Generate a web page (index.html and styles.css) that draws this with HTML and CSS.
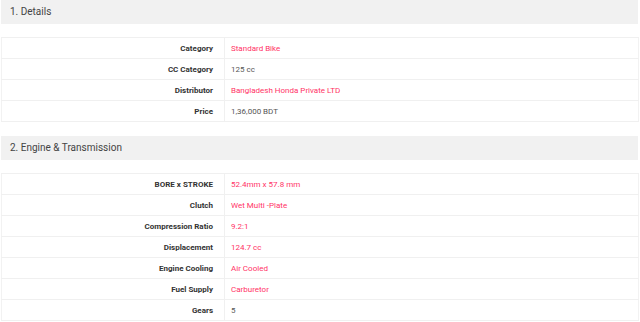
FILE: index.html
```html
<!DOCTYPE html>
<html>
<head>
<meta charset="utf-8">
<link rel="stylesheet" href="styles.css">
</head>
<body>
<div class="spec">
  <h3 class="spec-head">1. Details</h3>
  <table class="spec-table">
    <tr><th>Category</th><td class="link">Standard Bike</td></tr>
    <tr><th>CC Category</th><td>125 cc</td></tr>
    <tr><th>Distributor</th><td class="link">Bangladesh Honda Private LTD</td></tr>
    <tr><th>Price</th><td>1,36,000 BDT</td></tr>
  </table>
  <h3 class="spec-head">2. Engine &amp; Transmission</h3>
  <table class="spec-table">
    <tr><th>BORE x STROKE</th><td class="link">52.4mm x 57.8 mm</td></tr>
    <tr><th>Clutch</th><td class="link">Wet Multi -Plate</td></tr>
    <tr><th>Compression Ratio</th><td class="link">9.2:1</td></tr>
    <tr><th>Displacement</th><td class="link">124.7 cc</td></tr>
    <tr><th>Engine Cooling</th><td class="link">Air Cooled</td></tr>
    <tr><th>Fuel Supply</th><td class="link">Carburetor</td></tr>
    <tr><th>Gears</th><td>5</td></tr>
  </table>
</div>
</body>
</html>
```
FILE: styles.css
```css
html, body {
  margin: 0;
  padding: 0;
  background: #fff;
}
body {
  font-family: Roboto, "Liberation Sans", sans-serif;
  color: #555;
}
.spec {
  display: flex;
  flex-direction: column;
  padding: 0 1px 0 1px;
}
.spec-head {
  margin: 0;
  height: 24px;
  line-height: 24px;
  padding-left: 9px;
  background: #f1f1f1;
  font-size: 10px;
  font-weight: 400;
  color: #444;
  margin-right: 1px;
}
.spec-table {
  width: 100%;
  border-collapse: collapse;
  margin: 13px 0 14px 0;
  font-size: 8px;
  border: 1px solid #f2f2f2;
}
.spec-table tr {
  height: 21px;
}
.spec-table th,
.spec-table td {
  border-top: 1px solid #f0f0f0;
  border-bottom: 1px solid #f0f0f0;
  padding: 0;
  vertical-align: middle;
}
.spec-table th {
  width: 211px;
  text-align: right;
  padding-right: 11px;
  font-weight: 700;
  color: #333;
  border-right: 1px solid #f0f0f0;
}
.spec-table td {
  padding-left: 6px;
  color: #555;
}
.spec-table td.link {
  color: #ff3366;
}
```
